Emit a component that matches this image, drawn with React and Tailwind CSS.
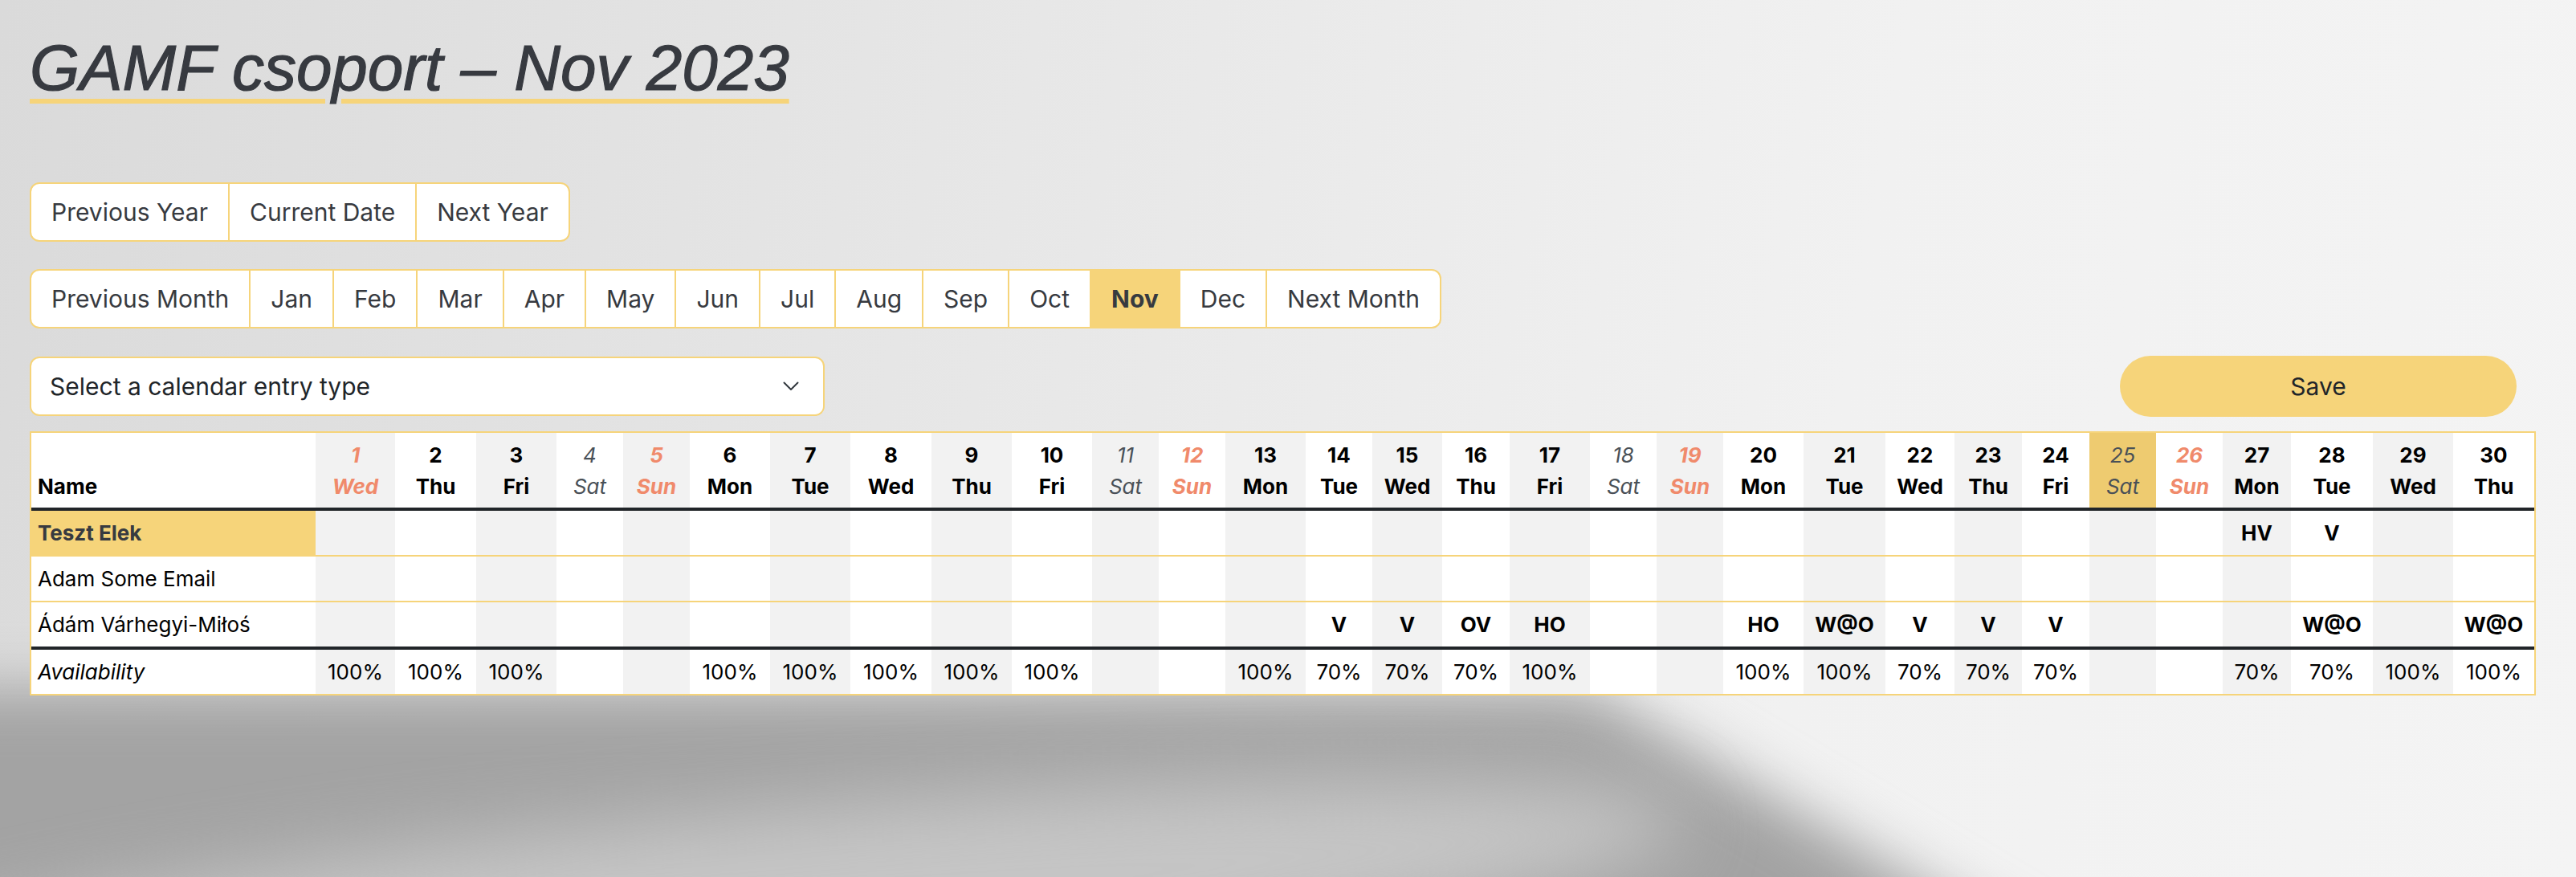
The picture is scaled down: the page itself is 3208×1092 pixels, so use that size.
import React from 'react'

const days = [
  { d: 1, n: 'Wed', t: 'holiday', w: 'w-[99px]', a: '100%' },
  { d: 2, n: 'Thu', t: 'work', w: 'w-[101px]', a: '100%' },
  { d: 3, n: 'Fri', t: 'work', w: 'w-[100px]', a: '100%' },
  { d: 4, n: 'Sat', t: 'sat', w: 'w-[83px]', a: '' },
  { d: 5, n: 'Sun', t: 'sun', w: 'w-[83px]', a: '' },
  { d: 6, n: 'Mon', t: 'work', w: 'w-[100px]', a: '100%' },
  { d: 7, n: 'Tue', t: 'work', w: 'w-[100px]', a: '100%' },
  { d: 8, n: 'Wed', t: 'work', w: 'w-[101px]', a: '100%' },
  { d: 9, n: 'Thu', t: 'work', w: 'w-[100px]', a: '100%' },
  { d: 10, n: 'Fri', t: 'work', w: 'w-[100px]', a: '100%' },
  { d: 11, n: 'Sat', t: 'sat', w: 'w-[83px]', a: '' },
  { d: 12, n: 'Sun', t: 'sun', w: 'w-[83px]', a: '' },
  { d: 13, n: 'Mon', t: 'work', w: 'w-[100px]', a: '100%' },
  { d: 14, n: 'Tue', t: 'work', w: 'w-[83px]', a: '70%' },
  { d: 15, n: 'Wed', t: 'work', w: 'w-[87px]', a: '70%' },
  { d: 16, n: 'Thu', t: 'work', w: 'w-[84px]', a: '70%' },
  { d: 17, n: 'Fri', t: 'work', w: 'w-[100px]', a: '100%' },
  { d: 18, n: 'Sat', t: 'sat', w: 'w-[83px]', a: '' },
  { d: 19, n: 'Sun', t: 'sun', w: 'w-[83px]', a: '' },
  { d: 20, n: 'Mon', t: 'work', w: 'w-[100px]', a: '100%' },
  { d: 21, n: 'Tue', t: 'work', w: 'w-[102px]', a: '100%' },
  { d: 22, n: 'Wed', t: 'work', w: 'w-[86px]', a: '70%' },
  { d: 23, n: 'Thu', t: 'work', w: 'w-[84px]', a: '70%' },
  { d: 24, n: 'Fri', t: 'work', w: 'w-[84px]', a: '70%' },
  { d: 25, n: 'Sat', t: 'sat', w: 'w-[83px]', a: '', today: true },
  { d: 26, n: 'Sun', t: 'sun', w: 'w-[83px]', a: '' },
  { d: 27, n: 'Mon', t: 'work', w: 'w-[85px]', a: '70%' },
  { d: 28, n: 'Tue', t: 'work', w: 'w-[102px]', a: '70%' },
  { d: 29, n: 'Wed', t: 'work', w: 'w-[100px]', a: '100%' },
  { d: 30, n: 'Thu', t: 'work', w: 'w-[101px]', a: '100%' },
]

const people = [
  { name: 'Teszt Elek', me: true, entries: { 27: 'HV', 28: 'V' } },
  { name: 'Adam Some Email', entries: {} },
  {
    name: 'Ádám Várhegyi-Miłoś',
    entries: { 14: 'V', 15: 'V', 16: 'OV', 17: 'HO', 20: 'HO', 21: 'W@O', 22: 'V', 23: 'V', 24: 'V', 28: 'W@O', 30: 'W@O' },
  },
]

const months = ['Jan', 'Feb', 'Mar', 'Apr', 'May', 'Jun', 'Jul', 'Aug', 'Sep', 'Oct', 'Nov', 'Dec']

const headText = {
  work: 'font-bold text-black',
  sat: 'italic font-normal text-[#495057]',
  sun: 'italic font-bold text-[#f08a6b]',
  holiday: 'italic font-bold text-[#f08a6b]',
}

function stripe(d) {
  return d % 2 === 1 ? 'bg-[#f2f2f2]' : 'bg-white'
}

function BtnGroup({ items, active }) {
  return (
    <div className="inline-flex h-[74px] overflow-hidden rounded-[12px] border-2 border-[#f6d47a] bg-white">
      {items.map((label, i) => (
        <button
          key={label}
          className={`flex h-full items-center px-[25px] text-[30px] text-[#373a40] ${i > 0 ? 'border-l-2 border-[#f6d47a]' : ''} ${label === active ? 'bg-[#f6d47a] font-bold' : ''}`}
        >
          {label}
        </button>
      ))}
    </div>
  )
}

export default function App() {
  return (
    <div className="relative min-h-[1092px] w-full overflow-hidden bg-[linear-gradient(100deg,#dadada_0%,#e6e6e6_35%,#f1f1f1_70%,#f4f4f4_100%)] font-['Inter',sans-serif]">
      {/* backdrop fold */}
      <div className="pointer-events-none absolute inset-0 blur-[35px]">
        <div className="absolute left-[-100px] top-[858px] h-[400px] w-[3000px] bg-[#a3a3a3] [clip-path:polygon(0_0,2080px_0,2760px_100%,0_100%)]" />
      </div>
      <div className="pointer-events-none absolute left-[-200px] top-[1010px] h-[230px] w-[2300px] rotate-[-5deg] rounded-[50%] bg-[#c5c5c5] blur-[45px]" />

      <div className="relative ml-[37px] w-[3121px] pt-[37px]">
        <h1 className="font-['Liberation_Sans',Arial,sans-serif] text-[80px] leading-[96px] italic text-[#373a40] underline decoration-[#f6d47a] decoration-[6px] underline-offset-[11px] [-webkit-text-stroke:1.2px_#373a40]">
          GAMF csoport – Nov 2023
        </h1>

        <div className="mt-[94px]">
          <BtnGroup items={['Previous Year', 'Current Date', 'Next Year']} />
        </div>
        <div className="mt-[34px]">
          <BtnGroup items={['Previous Month', ...months, 'Next Month']} active="Nov" />
        </div>

        <div className="mt-[34px] flex items-center justify-between">
          <div className="flex h-[74px] w-[990px] items-center justify-between rounded-[12px] border-2 border-[#f6d47a] bg-white pl-[23px] pr-[30px] text-[30px] text-[#212529]">
            <span>Select a calendar entry type</span>
            <svg width="20" height="12" viewBox="0 0 20 12" fill="none">
              <polyline points="1.5,1.5 10,10 18.5,1.5" stroke="#343a40" strokeWidth="2" strokeLinecap="round" strokeLinejoin="round" />
            </svg>
          </div>
          <button className="mr-[24px] h-[76px] w-[494px] rounded-full bg-[#f6d47a] text-[30px] text-[#212529]">
            Save
          </button>
        </div>

        <table className="mt-[18px] w-[3121px] table-fixed border-separate border-spacing-0 border-2 border-[#f6d47a] text-[26px] leading-[39px]">
          <colgroup>
            <col className="w-[354px]" />
            {days.map((c) => (
              <col key={c.d} className={c.w} />
            ))}
          </colgroup>
          <thead>
            <tr>
              <th className="border-b-4 border-[#212529] bg-white px-2 pb-[7px] pt-2 text-left align-bottom font-bold text-black">
                Name
              </th>
              {days.map((c) => (
                <th
                  key={c.d}
                  className={`border-b-4 border-[#212529] px-1 pb-[7px] pt-2 text-center align-bottom ${c.today ? 'bg-[#eecb70]' : stripe(c.d)} ${headText[c.t]}`}
                >
                  <div>{c.d}</div>
                  <div>{c.n}</div>
                </th>
              ))}
            </tr>
          </thead>
          <tbody>
            {people.map((p, i) => {
              const last = i === people.length - 1
              const line = last ? 'border-b-4 border-[#212529]' : 'border-b-2 border-[#f6d47a]'
              return (
                <tr key={p.name}>
                  <td className={`${line} px-2 py-2 ${p.me ? 'bg-[#f6d47a] font-bold text-[#373a40]' : 'bg-white text-black'}`}>
                    {p.name}
                  </td>
                  {days.map((c) => (
                    <td key={c.d} className={`${line} py-2 text-center font-bold text-black ${stripe(c.d)}`}>
                      {p.entries[c.d] || ''}
                    </td>
                  ))}
                </tr>
              )
            })}
          </tbody>
          <tfoot>
            <tr>
              <td className="bg-white px-2 py-2 italic text-black">Availability</td>
              {days.map((c) => (
                <td key={c.d} className={`py-2 text-center text-black ${stripe(c.d)}`}>
                  {c.a}
                </td>
              ))}
            </tr>
          </tfoot>
        </table>
      </div>
    </div>
  )
}
